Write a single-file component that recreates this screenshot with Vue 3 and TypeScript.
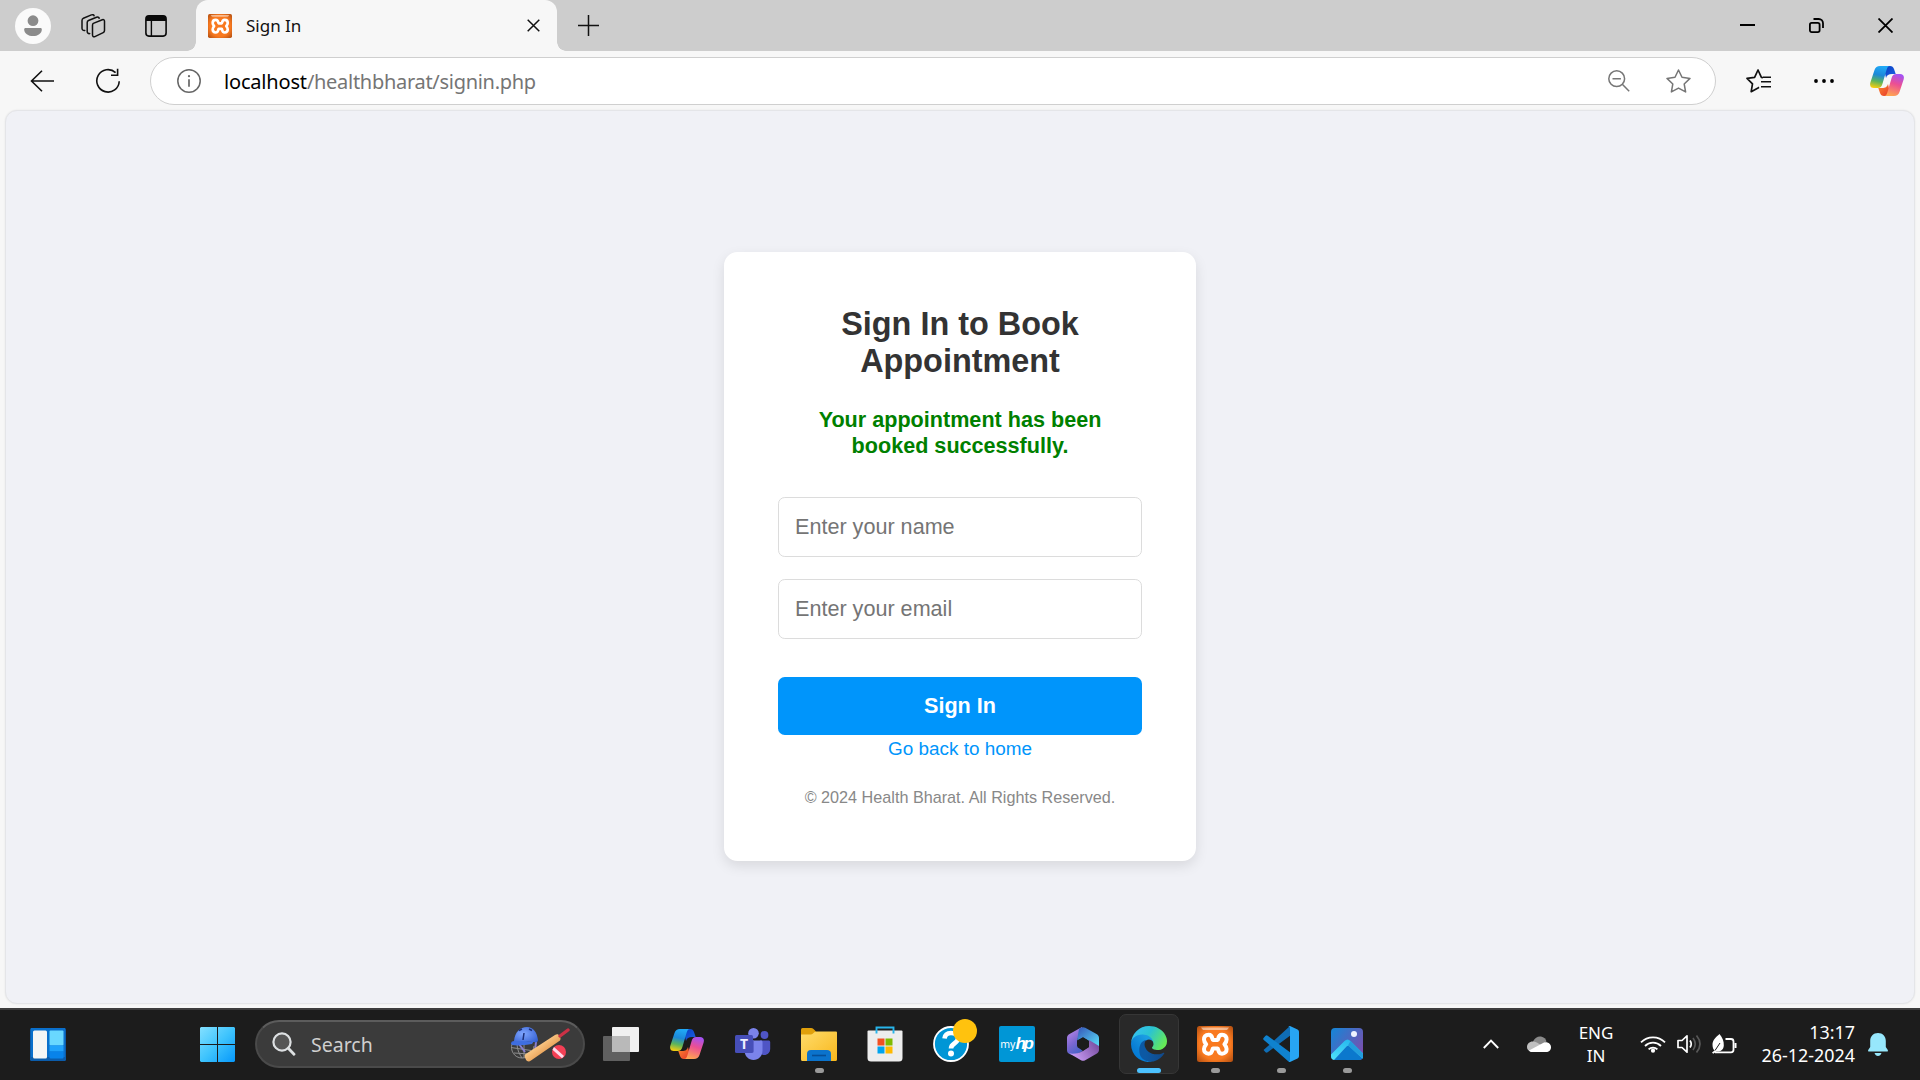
<script setup lang="ts">
import { ref } from 'vue'

const name = ref('')
const email = ref('')
</script>

<template>
  <div class="screen">
    <svg class="defs" width="0" height="0" aria-hidden="true">
      <defs>
        <linearGradient id="cpLeft" x1="0.4" y1="0" x2="0.2" y2="1">
          <stop offset="0" stop-color="#20a8f5" />
          <stop offset="0.38" stop-color="#1c88d8" />
          <stop offset="0.68" stop-color="#5cb45c" />
          <stop offset="1" stop-color="#ffcf0a" />
        </linearGradient>
        <linearGradient id="cpRight" x1="0.7" y1="0" x2="0.4" y2="1">
          <stop offset="0" stop-color="#a352f5" />
          <stop offset="0.45" stop-color="#ec4f93" />
          <stop offset="1" stop-color="#ffa452" />
        </linearGradient>
        <linearGradient id="cpTop" x1="0" y1="0" x2="1" y2="1">
          <stop offset="0" stop-color="#0a3fc0" />
          <stop offset="1" stop-color="#1b62e6" />
        </linearGradient>
        <linearGradient id="cpBottom" x1="0" y1="0" x2="1" y2="1">
          <stop offset="0" stop-color="#ff8b2e" />
          <stop offset="1" stop-color="#e5352c" />
        </linearGradient>
        <radialGradient id="xaBg" cx="0.5" cy="0.5" r="0.72">
          <stop offset="0.6" stop-color="#f97a20" />
          <stop offset="1" stop-color="#a9490f" />
        </radialGradient>
        <symbol id="copilot" viewBox="0 0 34 30">
          <path d="M16 0h4c2.200 0 3.300.9 4 3l1.700 5H22c-3.500 0-5 1-6 4l-2-9z" fill="url(#cpTop)" />
          <path d="M18 30h-4c-2.200 0-3.300-.9-4-3l-1.700-5H12c3.500 0 5-1 6-4l2 9z" fill="url(#cpBottom)" />
          <path d="M10 0h10c-2 0-2.700 1.500-3.400 3.700L12.400 18c-.8 2.700-2 4-4.600 4H4c-3 0-4.500-2-3.700-5.200L4.500 4C5.400 1.200 7.200 0 10 0z" fill="url(#cpLeft)" />
          <path d="M24 30H14c2 0 2.700-1.500 3.400-3.700L21.600 12c.8-2.700 2-4 4.600-4H30c3 0 4.500 2 3.700 5.200L29.500 26c-.9 2.800-2.700 4-5.500 4z" fill="url(#cpRight)" />
        </symbol>
        <symbol id="xampp" viewBox="0 0 36 36">
          <rect width="36" height="36" rx="2.500" fill="url(#xaBg)" />
          <path d="M4 1.500h28l-2 2.500H6z" fill="#fff" opacity="0.500" />
          <path d="M15.800 14H20.800C21.500 14 20.500 8.700 25 8.700C28.200 8.700 29.600 11 29.600 13.400C29.600 15.600 28.600 16.800 27.400 18.200C28.600 19.600 29.600 20.800 29.600 23C29.600 25.500 28.200 27.700 25 27.700C20.500 27.700 21.500 22.400 20.800 22.400H15.800C15.100 22.400 16.100 27.700 11.600 27.700C8.400 27.700 7 25.500 7 23C7 20.800 8 19.600 9.200 18.200C8 16.800 7 15.600 7 13.400C7 11 8.400 8.700 11.600 8.700C16.100 8.700 15.100 14 15.800 14Z" fill="none" stroke="#fff" stroke-width="4" stroke-linejoin="round" />
        </symbol>
      </defs>
    </svg>

    <header class="tabbar">
      <svg class="avatar" width="36" height="36" viewBox="0 0 36 36">
        <circle cx="18" cy="18" r="18" fill="#fafafa" />
        <circle cx="18" cy="12.700" r="5.400" fill="#8b8b8b" />
        <path d="M10.500 20h15c.8 0 1.300.6 1.300 1.400 0 4-4 6.600-8.800 6.600s-8.800-2.600-8.800-6.600c0-.8.5-1.400 1.300-1.400z" fill="#8b8b8b" />
      </svg>
      <svg class="spaces" width="26" height="26" viewBox="0 0 26 26" fill="none" stroke="#111" stroke-width="1.500" stroke-linejoin="round" stroke-linecap="round">
        <path d="M13.300 10.400l9-3.600c1.300-.5 2.200.1 2.200 1.400v9.300c0 1-.4 1.700-1.300 2.100l-8.300 4c-1.300.6-2.400 0-2.400-1.500v-9.500c0-1 .1-1.800.8-2.200z" />
        <path d="M9.700 20.600c-1.500.2-2.500-.6-2.500-2v-9c0-1 .3-1.700 1.300-2.100l8-3.200c1.300-.5 2.400-.1 2.700 1" />
        <path d="M4.800 17.400C3 17.600 2 16.800 2 15.300V7.500c0-1.100.4-1.900 1.400-2.300l8-3.300c1.400-.5 2.400-.1 2.700.9" />
      </svg>
      <svg class="vtabs" width="22" height="22" viewBox="0 0 22 22">
        <rect x="0.900" y="0.900" width="20.200" height="20.200" rx="3" fill="none" stroke="#0a0a0a" stroke-width="1.600" />
        <path d="M1 6V4a3 3 0 0 1 3-3h14a3 3 0 0 1 3 3v2z" fill="#0a0a0a" />
        <path d="M6.400 5v16" stroke="#0a0a0a" stroke-width="1.400" />
      </svg>
      <div class="tab">
        <svg width="24" height="24"><use href="#xampp" /></svg>
        <span class="tab-title">Sign In</span>
        <svg class="tab-close" width="13" height="13" viewBox="0 0 13 13"><path d="M.7.7l11.600 11.600M12.300.7L.7 12.300" stroke="#111" stroke-width="1.500" /></svg>
      </div>
      <svg class="plus" width="21" height="21" viewBox="0 0 21 21"><path d="M10.500 0v21M0 10.500h21" stroke="#111" stroke-width="1.500" /></svg>
      <div class="winbtns">
        <svg width="15" height="15" viewBox="0 0 15 15"><path d="M0 7h15" stroke="#000" stroke-width="2" /></svg>
        <svg width="15" height="15" viewBox="0 0 15 15" fill="none" stroke="#000" stroke-width="1.800">
          <rect x="0.900" y="4.900" width="9.700" height="9.200" rx="1.800" />
          <path d="M4.500 1h5.200a4.300 4.300 0 0 1 4.300 4.300V10" />
        </svg>
        <svg width="15" height="15" viewBox="0 0 15 15"><path d="M.5.5l14 14M14.500.5l-14 14" stroke="#000" stroke-width="1.800" /></svg>
      </div>
    </header>

    <div class="toolbar">
      <svg class="back" width="24" height="22" viewBox="0 0 24 22" fill="none" stroke="#111" stroke-width="1.600"><path d="M12 .8L1.500 11 12 21.200M1.500 11H24" /></svg>
      <svg class="reload" width="26" height="26" viewBox="0 0 26 26" fill="none" stroke="#111" stroke-width="1.600">
        <path d="M20.600 4.600A11.200 11.200 0 1 0 24.200 13.200" />
        <path d="M16 7.200h6.600V.8" />
      </svg>
      <div class="address">
        <svg class="info" width="24" height="24" viewBox="0 0 24 24" fill="none" stroke="#666" stroke-width="1.500">
          <circle cx="12" cy="12" r="11.200" />
          <path d="M12 10.200v7.600" stroke-width="1.700" />
          <circle cx="12" cy="7.200" r="1.100" fill="#666" stroke="none" />
        </svg>
        <span class="url"><b>localhost</b>/healthbharat/signin.php</span>
        <svg class="zoomout" width="22" height="22" viewBox="0 0 22 22" fill="none" stroke="#767676" stroke-width="1.500">
          <circle cx="8.700" cy="8.700" r="7.900" /><path d="M4.500 8.700h8.400M14.300 14.300l6.900 6.900" />
        </svg>
        <svg class="star" width="25" height="24" viewBox="0 0 25 24" fill="none" stroke="#767676" stroke-width="1.500" stroke-linejoin="round">
          <path d="M12.500 1l3.500 7.300 8 1.100-5.800 5.600 1.400 7.900-7.100-3.800-7.100 3.800L6.800 15 1 9.400l8-1.100z" />
        </svg>
      </div>
      <svg class="favs" width="25" height="24" viewBox="0 0 25 24" fill="none" stroke="#111" stroke-width="1.700" stroke-linejoin="round">
        <path d="M17 8.700l-1.600-.3L12 1 8.600 8.300 1 9.400l5.500 5.500-1.300 7.800 6.800-3.700 1-.7" />
        <path d="M15 12.800h10M15 17.800h10M17 8.200h8" stroke-width="1.600" />
      </svg>
      <svg class="dots" width="20" height="4" viewBox="0 0 20 4"><circle cx="2" cy="2" r="1.900" /><circle cx="10" cy="2" r="1.900" /><circle cx="18" cy="2" r="1.900" /></svg>
      <svg class="cop" width="34" height="30"><use href="#copilot" /></svg>
    </div>

    <main class="viewport">
      <div class="page">
        <form class="card" @submit.prevent>
          <h2>Sign In to Book Appointment</h2>
          <p class="message">Your appointment has been booked successfully.</p>
          <input v-model="name" type="text" placeholder="Enter your name" />
          <input v-model="email" type="email" placeholder="Enter your email" />
          <button type="submit">Sign In</button>
          <a class="home">Go back to home</a>
          <p class="footer">© 2024 Health Bharat. All Rights Reserved.</p>
        </form>
      </div>
    </main>

    <footer class="taskbar">
      <svg class="widgets" width="36" height="33" viewBox="0 0 36 33">
        <rect width="36" height="33" rx="1.500" fill="#0b5cab" />
        <rect x="1" width="34" height="29" fill="#0a6fcb" />
        <rect x="3" y="2.500" width="14" height="28" rx="1.500" fill="#f5f5f5" />
        <rect x="19.500" y="2.500" width="14" height="15" rx="1" fill="#69d8ff" />
        <rect x="19.500" y="17.500" width="14" height="6" fill="#1fa2fb" />
        <rect x="19.500" y="23.500" width="14" height="7" rx="1" fill="#0883ea" />
      </svg>
      <svg class="start" width="35" height="35" viewBox="0 0 35 35">
        <defs><linearGradient id="win" gradientUnits="userSpaceOnUse" x1="0" y1="0" x2="35" y2="35"><stop offset="0" stop-color="#84e0ff" /><stop offset="0.500" stop-color="#3fc4fd" /><stop offset="1" stop-color="#0698fb" /></linearGradient></defs>
        <path d="M1 0h16v17H0V1zM18 0h16l1 1v16H18zM0 18h17v17H1l-1-1zM18 18h17v16l-1 1H18z" fill="url(#win)" />
      </svg>
      <div class="search">
        <svg class="glass" width="24" height="24" viewBox="0 0 24 24" fill="none" stroke="#dde0e2" stroke-width="2.200" stroke-linecap="round"><circle cx="10" cy="10" r="8.600" fill="#555" /><path d="M16.300 16.300l5.700 6" stroke-width="2.800" /></svg>
        <span>Search</span>
        <svg class="cricket" width="60" height="36" viewBox="0 0 60 36">
          <defs>
            <radialGradient id="helm" cx="0.450" cy="0.400" r="0.700"><stop offset="0" stop-color="#7fa6ff" /><stop offset="1" stop-color="#2f5bd0" /></radialGradient>
            <linearGradient id="bat" x1="0.300" y1="0.300" x2="0.700" y2="0.700"><stop offset="0" stop-color="#ffd596" /><stop offset="1" stop-color="#e3964a" /></linearGradient>
          </defs>
          <g fill="none" stroke="#8e8e8e" stroke-width="1"><path d="M2 18c-2 6 2 14 10 14 6 0 11-4 12-12M1 21.500l20 3M4 27l16 1M7 18c0 6 3 11 5 14M14 18v14" /></g>
          <path d="M9 18l6 8M26 16l-1 9-7 5" fill="none" stroke="#8a7fd0" stroke-width="2" />
          <path d="M4 15C5 6 10 1 17 1c6 0 10 5 11 13 0 2-2 3-4 2-7-2-13 2-23 2 0-2 1-3 3-3z" fill="url(#helm)" />
          <path d="M1 17c6-3 14-1 23-2l-2 3c-6 1-14 2-20 1z" fill="#3f6ee0" />
          <path d="M14 7l-1 7M9 4.500l3-1.500M19 3l3 1.500" stroke="#1c2f78" stroke-width="1.500" fill="none" />
          <path d="M15 28.500L45 9c2-1.200 3.500-.8 4.500.8s1.500 3.200.5 4.700L21 34.500c-2 1.500-4 1-5-.8s-2-3.700-1-5.200z" fill="url(#bat)" />
          <path d="M50 10l8-6" stroke="#cc3145" stroke-width="3.300" stroke-linecap="round" />
          <circle cx="49" cy="26" r="7" fill="#f33f55" />
          <path d="M44 21l10 9-2 2.300-9.500-8.600z" fill="#ffd8ea" />
        </svg>
      </div>

      <nav class="apps">
        <div class="app">
          <svg width="36" height="34" viewBox="0 0 36 34"><rect x="9" width="27" height="25" rx="1" fill="#f0f0f0" /><rect y="9" width="27" height="25" rx="1" fill="#606060" /><path d="M9 9h18v16H9z" fill="#b9b9b9" /></svg>
        </div>
        <div class="app"><svg width="34" height="30"><use href="#copilot" /></svg></div>
        <div class="app">
          <svg width="36" height="32" viewBox="0 0 36 32">
            <circle cx="29.500" cy="7" r="3.900" fill="#4f55c5" /><circle cx="18.500" cy="5.300" r="5.300" fill="#7b83eb" />
            <path d="M25 12.500h8.500c1 0 1.700.7 1.700 1.700v6.300c0 4-2.700 6.500-6 6.500-2 0-3.200-.6-4.200-1.500z" fill="#4f55c5" />
            <path d="M10 12.500h16c1 0 1.500.6 1.500 1.500v8.500C27.500 28 23.500 32 18.500 32S9.500 28 9.500 22.500z" fill="#7b83eb" />
            <path d="M9.500 25h7.500c1 0 2-1 2-2V12.500H10z" fill="#5c62cc" />
            <rect y="7" width="18" height="18" rx="1.500" fill="#464eb8" />
            <text x="9" y="21" text-anchor="middle" font-family="Noto Sans, sans-serif" font-weight="700" font-size="14" fill="#eef">T</text>
          </svg>
        </div>
        <div class="app">
          <svg width="36" height="33" viewBox="0 0 36 33">
            <defs><linearGradient id="fold" x1="0" y1="0" x2="1" y2="1"><stop offset="0" stop-color="#ffdc6b" /><stop offset="1" stop-color="#f8b71c" /></linearGradient></defs>
            <path d="M0 1.500Q0 0 1.500 0H10q1.500 0 2.500 1L15 3.500v6H0z" fill="#e0a00b" /><path d="M0 6.500h10c2 0 3-3 5-3h20q1 0 1 1V31.500q0 1.500-1.500 1.500h-33Q0 33 0 31.500z" fill="url(#fold)" />
            <path d="M6 33v-7q0-4 4-4h16q4 0 4 4v7z" fill="#0b73cc" /><path d="M11 27.500h14" stroke="#064e96" stroke-width="1.600" />
          </svg>
          <i></i>
        </div>
        <div class="app">
          <svg width="36" height="36" viewBox="0 0 36 36">
            <path d="M0.500 5.500q0-1 1-1h33q1 0 1 1V32q0 3.500-3.500 3.500H4Q.5 35.500.5 32z" fill="#ededed" />
            <path d="M9.500 7.500V1.500h17v6" fill="none" stroke="#27b4ea" stroke-width="1.900" />
            <path d="M10.500 12.500h7v7h-7z" fill="#f25022" /><path d="M18.500 12.500h7v7h-7z" fill="#7fba00" /><path d="M10.500 20.500h7v7h-7z" fill="#00a4ef" /><path d="M18.500 20.500h7v7h-7z" fill="#ffb900" />
          </svg>
        </div>
        <div class="app">
          <svg width="36" height="36" viewBox="0 0 36 36">
            <circle cx="18" cy="18" r="17" fill="#0096d6" stroke="#fff" stroke-width="1.800" />
            <path d="M11.500 12.500C12 8.500 15 7 18 7c4 0 7 2 7 5.500 0 5-7 4.500-7 10" fill="none" stroke="#fff" stroke-width="4.600" /><circle cx="18" cy="27.500" r="3" fill="#fff" />
          </svg>
          <b class="badge"></b>
        </div>
        <div class="app"><div class="myhp"><span>my</span><em>hp</em></div></div>
        <div class="app">
          <svg width="32" height="34" viewBox="0 0 32 34">
            <defs>
              <linearGradient id="m1" x1="0" y1="0" x2="0.500" y2="1"><stop offset="0" stop-color="#c48ff0" /><stop offset="0.600" stop-color="#7a66d0" /><stop offset="1" stop-color="#4663c8" /></linearGradient>
              <linearGradient id="m2" x1="0" y1="0" x2="1" y2="1"><stop offset="0" stop-color="#3453b8" /><stop offset="1" stop-color="#5be3fb" /></linearGradient>
              <linearGradient id="m3" x1="0" y1="0.500" x2="1" y2="0"><stop offset="0" stop-color="#c79af2" /><stop offset="1" stop-color="#6e4497" /></linearGradient>
            </defs>
            <path d="M15 0L2.500 7C.8 8 0 9 0 11v12c0 2 .8 3 2.500 4l4 1.500L16 24l-6-5v-7l7-5z" fill="url(#m1)" />
            <path d="M12 2l2-1.200c1.500-.8 2.700-.8 4.200 0L29.500 7C31.200 8 32 9 32 11v9l-10-6-6-3.500-6 3z" fill="url(#m2)" />
            <path d="M2.500 26.500l11.500 6.700c1.500.8 2.700.8 4.200 0l11.300-6.500C31.200 25.700 32 24.500 32 23v-4l-10-6v7l-6 4c-3 2-8 3-13.500 2.500z" fill="url(#m3)" />
            <path d="M10.500 13.500L16 10.300l5.500 3.200v6.700L16 23.500l-5.500-3.300z" fill="#1c1c1c" />
          </svg>
        </div>
        <div class="app active">
          <svg width="36" height="36" viewBox="0 0 256 256">
            <defs>
              <linearGradient id="e1" x1="0.250" y1="0.500" x2="0.950" y2="0.500"><stop offset="0" stop-color="#0c59a4" /><stop offset="1" stop-color="#114a8b" /></linearGradient>
              <linearGradient id="e2" x1="0.800" y1="0.300" x2="0.200" y2="1"><stop offset="0" stop-color="#1b9de2" /><stop offset="0.600" stop-color="#0a7fd6" /><stop offset="1" stop-color="#0078d4" /></linearGradient>
              <linearGradient id="e3" x1="0.050" y1="0.200" x2="1" y2="0.600"><stop offset="0" stop-color="#35c1f1" /><stop offset="0.450" stop-color="#2bc3d2" /><stop offset="1" stop-color="#66eb55" /></linearGradient>
            </defs>
            <path fill="url(#e2)" d="M105.730 241.420a79.200 79.200 0 0 1-22.740-21.340 80.720 80.720 0 0 1 29.530-120c3.120-1.470 8.450-4.130 15.540-4a32.350 32.350 0 0 1 25.690 13 31.880 31.880 0 0 1 6.360 18.660c0-.21 24.460-79.600-80-79.600-43.900 0-80 41.660-80 78.210a130.150 130.150 0 0 0 12.110 56 128 128 0 0 0 156.380 67.110 75.550 75.550 0 0 1-62.780-8z" />
            <path fill="url(#e1)" d="M231.070 190.540c-3.410 1.780-6.930 3.340-10.540 4.670a101.930 101.930 0 0 1-35.900 6.460c-47.320 0-88.540-32.550-88.540-74.320a31.480 31.480 0 0 1 16.430-27.310c-42.800 1.800-53.800 46.400-53.800 72.530 0 73.880 68.090 81.370 82.760 81.370 7.910 0 19.840-2.300 27-4.560l1.310-.44a128.340 128.340 0 0 0 66.600-52.800 4 4 0 0 0-5.320-5.600z" />
            <path fill="url(#e3)" d="M152.330 148.860c-.81 1.050-3.300 2.500-3.300 5.660 0 2.610 1.700 5.120 4.720 7.230 14.380 10 41.490 8.680 41.560 8.680a59.560 59.560 0 0 0 30.270-8.350A61.380 61.380 0 0 0 256 109.260c.26-22.410-8-37.310-11.340-43.910C223.460 23.890 177.720 0 128 0A128 128 0 0 0 0 126.150c.48-36.540 36.800-66.050 80-66.050 3.500 0 23.460.34 42 10.070 16.340 8.580 24.900 18.940 30.850 29.210 6.180 10.670 7.280 24.150 7.280 29.520s-2.740 13.330-7.800 19.960z" />
          </svg>
          <i></i>
        </div>
        <div class="app"><svg width="36" height="36"><use href="#xampp" /></svg><i></i></div>
        <div class="app">
          <svg width="36" height="36" viewBox="0 0 100 100">
            <path d="M1.500 67L7 73q3 2.500 6 0L75 27V0z" fill="#0f6db5" />
            <path d="M1.500 33L7 27q3-2.500 6 0L75 73v27q-4-1-5-2L1.500 38q-2-2.500 0-5z" fill="#0f82cf" />
            <path d="M75 0l21 10q4 2 4 6v68q0 4-4 6L75 100q-3 0-5-2.500 5 2 5-3.500V6q0-5.500-5-3.500Q72 0 75 0z" fill="#27a5f3" />
          </svg>
          <i></i>
        </div>
        <div class="app">
          <svg width="32" height="32" viewBox="0 0 32 32">
            <defs>
              <linearGradient id="p1" x1="0" y1="0" x2="1" y2="0.700"><stop offset="0" stop-color="#1287d8" /><stop offset="1" stop-color="#7a4fae" /></linearGradient>
              <linearGradient id="p2" x1="0.500" y1="0" x2="0" y2="1"><stop offset="0" stop-color="#27b9ef" /><stop offset="1" stop-color="#4fe3fb" /></linearGradient>
              <clipPath id="pclip"><rect width="32" height="32" rx="4" /></clipPath>
            </defs>
            <g clip-path="url(#pclip)">
              <rect width="32" height="32" fill="url(#p1)" />
              <path d="M3 32L17 17l15 12v3z" fill="#0b78cd" />
              <path d="M0 26.500L13.500 13q3-3 6 0L32 25.500V31L18.500 18.500q-1.500-1.500-3 0L3 32H0z" fill="url(#p2)" />
              <path d="M17 17.500L32 31v-5.500L19.500 13z" fill="#239ddd" />
            </g>
            <circle cx="23" cy="6" r="3" fill="#eef3ff" />
          </svg>
          <i></i>
        </div>
      </nav>

      <div class="tray">
        <svg class="chev" width="16" height="10" viewBox="0 0 16 10"><path d="M.8 9L8 1.700 15.200 9" fill="none" stroke="#fff" stroke-width="1.900" /></svg>
        <svg class="cloud" width="24" height="16" viewBox="0 0 24 16">
          <path d="M6 5.500C8 1.500 11 0 14 .5c3 .5 5 2.500 5.500 5L10 12z" fill="#8a8a8a" />
          <path d="M0 11c0-3.500 3-6 6.500-5.500 2 0 3.500 1 5 2L20 12 4 15.500C1.500 15 0 13.500 0 11z" fill="#c0c0c0" />
          <path d="M2 14.500L17 6.500c4-1 7 1.500 7 4.700 0 2.800-2 4.800-5 4.800H5c-1.200 0-2.200-.5-3-1.500z" fill="#fff" />
        </svg>
        <div class="lang"><span>ENG</span><span>IN</span></div>
        <svg class="wifi" width="26" height="18" viewBox="0 0 26 18" fill="none" stroke="#fff" stroke-width="1.800">
          <path d="M1 7.300a17 17 0 0 1 24 0M5 11a11.300 11.300 0 0 1 16 0M8.600 14.400a6.200 6.200 0 0 1 8.800 0" /><circle cx="13" cy="15.700" r="2.100" fill="#fff" stroke="none" />
        </svg>
        <svg class="vol" width="25" height="20" viewBox="0 0 25 20" fill="none" stroke="#fff" stroke-width="1.700" stroke-linejoin="round">
          <path d="M1 6.500h4l5-4.700v16.400l-5-4.700H1z" /><path d="M13 6.500q2.500 3.500 0 7" /><path d="M16 4q4.500 6 0 12M19.500 1.500q7 8.500 0 17" stroke="#585858" />
        </svg>
        <svg class="batt" width="25" height="21" viewBox="0 0 25 21">
          <path d="M13.500 5H19q2.500 0 2.500 2.500v8.300q0 2.500-2.500 2.500H3" fill="none" stroke="#fff" stroke-width="1.800" /><path d="M22.500 9h2v5h-2z" fill="#fff" />
          <path d="M7.500 0C4 3 .5 6 .5 10.500c0 3 .8 4.800 2 6L0 18.500l1.200 1.200 3.300-2.200c4 .3 7-1.500 7.300-6C12 7 10.500 3.500 7.500 0z" fill="#fff" /><path d="M3 16.500L8 9" stroke="#1c1c1c" />
        </svg>
        <div class="clock"><span>13:17</span><span>26-12-2024</span></div>
        <svg class="bell" width="20" height="23" viewBox="0 0 20 23" fill="#97e7fc"><path d="M10 0c4.700 0 7.800 3.500 7.800 8v6l2 3q.4 1.500-.8 1.500H1Q-.2 18.500.2 17l2-3V8C2.200 3.500 5.300 0 10 0zM6.500 20h7q-1 3-3.500 3t-3.500-3z" /></svg>
      </div>
    </footer>
  </div>
</template>

<style>
body {
  margin: 0;
  overflow: hidden;
}
</style>

<style scoped>
.screen {
  width: 1920px;
  height: 1080px;
  display: flex;
  flex-direction: column;
  background: #f7f7f7;
  overflow: hidden;
  font-family: 'Noto Sans', sans-serif;
}
.screen * {
  box-sizing: border-box;
}
.defs {
  position: absolute;
}
svg {
  display: block;
  flex: none;
}
.tabbar {
  height: 51px;
  flex: none;
  display: flex;
  align-items: center;
  background: #cdcdcd;
}
.avatar {
  margin-left: 15px;
}
.spaces {
  margin-left: 29px;
}
.vtabs {
  margin-left: 39px;
}
.tab {
  position: relative;
  width: 361px;
  height: 51px;
  margin-left: 29px;
  padding: 0 17px 0 12px;
  display: flex;
  align-items: center;
  border-radius: 12px 12px 0 0;
  background: #f7f7f7;
}
.tab::before,
.tab::after {
  content: '';
  position: absolute;
  bottom: 0;
  width: 9px;
  height: 9px;
}
.tab::before {
  left: -9px;
  background: radial-gradient(circle at 0 0, #cdcdcd 8.5px, #f7f7f7 9px);
}
.tab::after {
  right: -9px;
  background: radial-gradient(circle at 100% 0, #cdcdcd 8.5px, #f7f7f7 9px);
}
.tab-title {
  margin-left: 14px;
  font-size: 17px;
  line-height: 24px;
  color: #111;
}
.tab-close {
  margin-left: auto;
}
.plus {
  margin-left: 21px;
}
.winbtns {
  display: flex;
  gap: 54px;
  margin-left: auto;
  margin-right: 27px;
}
.toolbar {
  height: 59px;
  flex: none;
  display: flex;
  align-items: center;
  padding-top: 1px;
}
.back {
  margin-left: 30px;
}
.reload {
  margin-left: 41px;
}
.address {
  width: 1566px;
  height: 48px;
  margin-left: 29px;
  padding: 0 24px 0 26px;
  display: flex;
  align-items: center;
  border: 1px solid #cfcfcf;
  border-radius: 24px;
  background: #fff;
}
.url {
  margin-left: 23px;
  font-size: 20px;
  letter-spacing: -0.29px;
  color: #757575;
}
.url b {
  font-weight: 400;
  letter-spacing: -0.18px;
  color: #000;
}
.zoomout {
  margin-left: auto;
}
.star {
  margin-left: 36px;
}
.favs {
  margin-left: 30px;
}
.dots {
  margin-left: 43px;
}
.cop {
  margin-left: 36px;
}
.viewport {
  height: 898px;
  flex: none;
  padding: 0 5px 4px;
}
.page {
  height: 894px;
  padding-top: 141px;
  border: 1px solid #e4e5e8;
  border-radius: 12px;
  background: #f0f1f6;
  box-shadow: 0 0 2px rgba(0, 0, 0, 0.08);
}
.card {
  width: 472px;
  height: 609px;
  margin: 0 auto;
  padding: 54px;
  display: flex;
  flex-direction: column;
  align-items: center;
  border-radius: 13.5px;
  background: #fff;
  box-shadow: 0 5px 13px rgba(0, 0, 0, 0.1);
  font-family: 'Liberation Sans', Arial, sans-serif;
  text-align: center;
}
h2 {
  margin: 0 0 27px;
  font-size: 32.4px;
  line-height: 37px;
  color: #333;
}
.message {
  width: 330px;
  margin: 0 0 38px;
  font-size: 21.6px;
  font-weight: 700;
  line-height: 26px;
  color: #008000;
}
input {
  width: 364px;
  height: 60px;
  margin-bottom: 22px;
  padding: 0 16px;
  border: 1px solid #dcdcdc;
  border-radius: 6.75px;
  background: #fff;
  font: 21.6px 'Liberation Sans', Arial, sans-serif;
}
input::placeholder {
  color: #757575;
}
button {
  width: 364px;
  height: 58px;
  flex: none;
  margin-top: 16px;
  padding: 0;
  border: 0;
  border-radius: 6.75px;
  background: #0095fb;
  color: #fff;
  font: 700 21.6px 'Liberation Sans', Arial, sans-serif;
}
.home {
  margin-top: 3px;
  font-size: 18.9px;
  line-height: 22px;
  color: #0095fb;
}
.footer {
  margin: 28px 0 0;
  font-size: 16.2px;
  line-height: 19px;
  color: #888;
}
.taskbar {
  height: 72px;
  flex: none;
  display: flex;
  align-items: center;
  padding-bottom: 2px;
  border-top: 2px solid #3d3d3d;
  background: #1c1c1c;
}
.widgets {
  margin-left: 30px;
}
.start {
  margin-left: 134px;
}
.search {
  width: 330px;
  height: 48px;
  margin-left: 20px;
  padding: 0 13px 0 15px;
  display: flex;
  align-items: center;
  border: 2px solid #4a4a4a;
  border-top-color: #5c5c5c;
  border-radius: 24px;
  background: #3b3b3b;
  color: #cfcfcf;
  font-size: 19.5px;
}
.search span {
  margin-left: 15px;
}
.cricket {
  margin-left: auto;
}
.apps {
  display: flex;
  margin-left: 3px;
}
.app {
  position: relative;
  width: 66px;
  height: 60px;
  display: flex;
  align-items: center;
  justify-content: center;
}
.app i {
  position: absolute;
  left: 29px;
  bottom: 1px;
  width: 9px;
  height: 5px;
  border-radius: 3px;
  background: #9a9a9a;
}
.active::before {
  content: '';
  position: absolute;
  inset: 0 3px;
  border: 1px solid #363636;
  border-radius: 7px;
  background: #292929;
}
.active svg {
  position: relative;
}
.app.active i {
  left: 21px;
  width: 24px;
  background: #4cc2ff;
}
.badge {
  position: absolute;
  left: 35px;
  top: 5px;
  width: 24px;
  height: 24px;
  border-radius: 50%;
  background: #ffc20e;
}
.myhp {
  width: 36px;
  height: 36px;
  display: flex;
  align-items: center;
  justify-content: center;
  border-radius: 2px;
  background: #0096d6;
  color: #fff;
  font-size: 10.5px;
  line-height: 36px;
}
.myhp em {
  font: italic 700 17px/34px 'Liberation Sans', Arial, sans-serif;
  letter-spacing: -2.2px;
  padding-right: 2px;
}
.tray {
  display: flex;
  align-items: center;
  margin-left: auto;
  margin-right: 32px;
  color: #fff;
}
.cloud {
  margin-left: 28px;
}
.lang,
.clock {
  display: flex;
  flex-direction: column;
  font-size: 17px;
  line-height: 23.5px;
}
.lang {
  width: 40px;
  margin-left: 25px;
  align-items: center;
}
.wifi {
  margin-left: 24px;
}
.vol {
  margin-left: 11px;
}
.batt {
  margin-left: 10px;
}
.clock {
  width: 111px;
  margin-left: 8px;
  padding-right: 1px;
  align-items: flex-end;
  font-size: 17.9px;
}
.bell {
  margin-left: 12px;
}
</style>
